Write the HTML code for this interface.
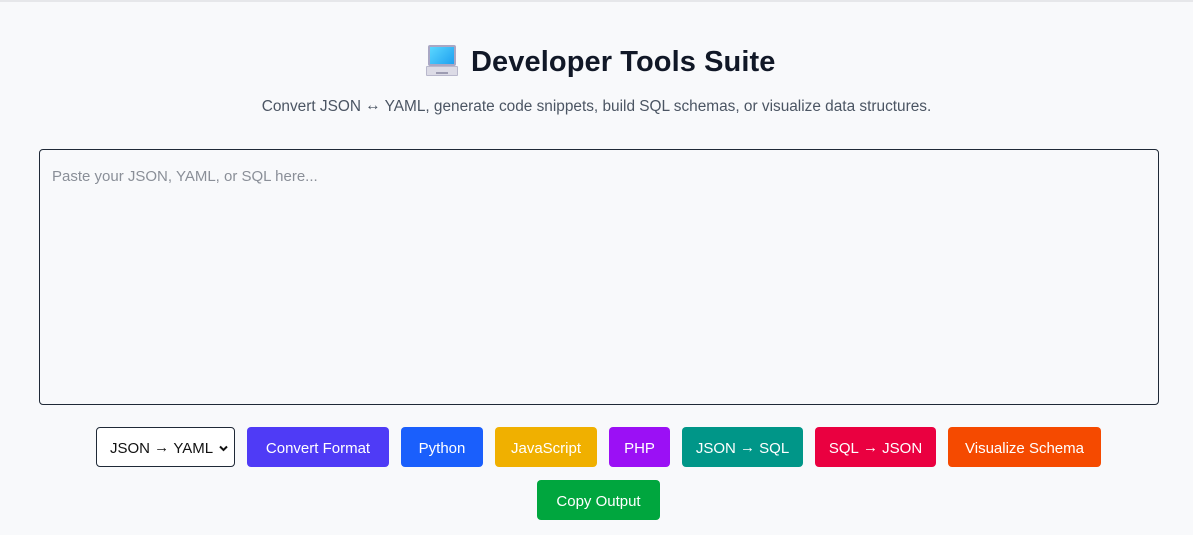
<!DOCTYPE html>
<html><head><meta charset="utf-8"><style>
*{box-sizing:border-box;margin:0;padding:0}
body{width:1193px;height:535px;background:#f8f9fb;font-family:"Liberation Sans","DejaVu Sans",sans-serif;position:relative;overflow:hidden}
.a{position:absolute}
h1{position:absolute;left:471px;top:43px;font-size:29px;font-weight:bold;color:#111827;letter-spacing:0.1px;line-height:38px}
.sub{left:0;width:1193px;text-align:center;top:98px;font-size:15.4px;color:#4b5563}
.ta{left:39px;top:149px;width:1120px;height:256px;border:1px solid #1f2937;border-radius:4px;background:#f8f9fb}
.ta span{position:absolute;left:12px;top:18px;font-size:15px;color:#8a8f98}
.b{position:absolute;top:427px;height:40px;border-radius:4px;color:#fff;font-size:15px;display:flex;align-items:center;justify-content:center;padding-top:3px}
.sel{left:96px;width:139px;border:1px solid #1f2937;color:#111;background:#fff;justify-content:flex-start;padding-left:13px}
.ar{font-family:"Liberation Sans",sans-serif;position:relative;top:-1px}
</style></head><body>
<div class="a" style="left:0;top:0;width:1193px;height:2px;background:#e6e7ea"></div>
<div class="a" style="left:428px;top:45px;width:28px;height:21px;background:#a9a7c4;border-radius:2px"></div>
<div class="a" style="left:430px;top:47px;width:24px;height:17px;background:linear-gradient(135deg,#5ad7ff,#1fa0f0)"></div>
<div class="a" style="left:426px;top:66px;width:32px;height:10px;background:#dcdbe6;border:1px solid #b9b8cc;border-radius:1px"></div>
<div class="a" style="left:436px;top:72px;width:12px;height:2px;background:#9d9cb2"></div>
<h1>Developer Tools Suite</h1>
<div class="a sub">Convert JSON <span class="ar">↔</span> YAML, generate code snippets, build SQL schemas, or visualize data structures.</div>
<div class="a ta"><span>Paste your JSON, YAML, or SQL here...</span></div>
<div class="b sel">JSON <span class="ar">&nbsp;→&nbsp;</span> YAML<svg style="position:absolute;right:6px;top:17px" width="9" height="7" viewBox="0 0 9 7"><path d="M1 1.5l3.5 3.5 3.5-3.5" fill="none" stroke="#111" stroke-width="2"/></svg></div>
<div class="b" style="left:247px;width:142px;background:#4f3bf6">Convert Format</div>
<div class="b" style="left:401px;width:82px;background:#1a5ffc">Python</div>
<div class="b" style="left:495px;width:102px;background:#f0b000">JavaScript</div>
<div class="b" style="left:609px;width:61px;background:#9b10f5">PHP</div>
<div class="b" style="left:682px;width:121px;background:#009688">JSON&nbsp;<span class="ar">→</span>&nbsp;SQL</div>
<div class="b" style="left:815px;width:121px;background:#ea0040">SQL&nbsp;<span class="ar">→</span>&nbsp;JSON</div>
<div class="b" style="left:948px;width:153px;background:#f54a00">Visualize Schema</div>
<div class="b" style="left:537px;top:480px;width:123px;background:#00a63e">Copy Output</div>
</body></html>
